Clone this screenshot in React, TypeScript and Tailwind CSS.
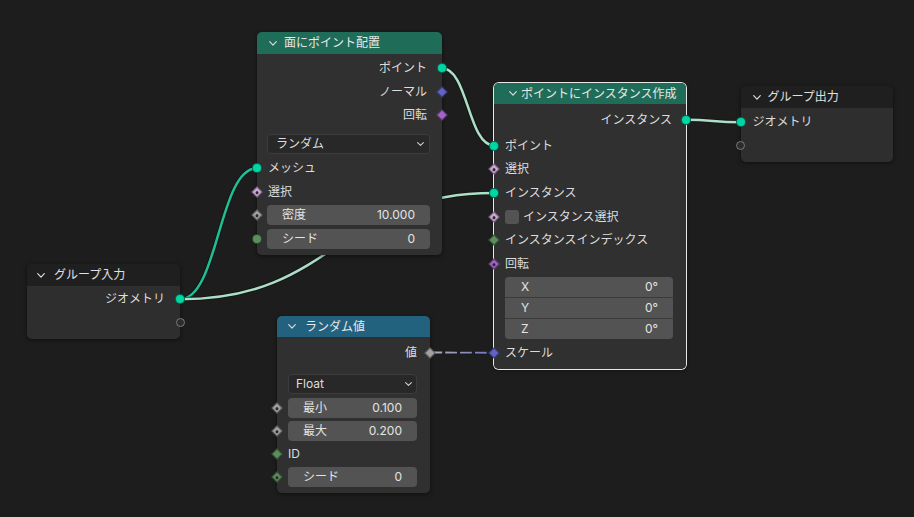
import React from 'react';

const GEO = 'bg-[#00d6a3]';
const VEC = 'bg-[#6363c7]';
const ROT = 'bg-[#a363c7]';
const BOOL = 'bg-[#cca6d6]';
const FLT = 'bg-[#a1a1a1]';
const INT = 'bg-[#5a8f5c]';

type Shape = 'circle' | 'diamond' | 'empty';

function Socket({ side, shape, color = '', dot }: { side: 'l' | 'r'; shape: Shape; color?: string; dot?: boolean }) {
  return (
    <div
      className={`absolute top-1/2 -translate-y-1/2 w-[10px] h-[10px] flex items-center justify-center z-10 ${
        side === 'l' ? 'left-[-5px]' : 'right-[-5px]'
      }`}
    >
      {shape === 'circle' && <div className={`w-[10px] h-[10px] shrink-0 rounded-full border border-black/50 ${color}`} />}
      {shape === 'empty' && <div className="w-[9px] h-[9px] shrink-0 rounded-full border border-[#7a7a7a] bg-[#2c2c2c]" />}
      {shape === 'diamond' && (
        <div className={`w-[8px] h-[8px] shrink-0 rotate-45 border border-black/40 flex items-center justify-center ${color}`}>
          {dot && <div className="w-[3px] h-[3px] shrink-0 rounded-full bg-[#2a2a2a]" />}
        </div>
      )}
    </div>
  );
}

function Chevron() {
  return (
    <svg width="8" height="5" viewBox="0 0 8 5" className="shrink-0">
      <path d="M0.7 0.7 L4 4.2 L7.3 0.7" fill="none" stroke="#dadada" strokeWidth="1.2" strokeLinecap="round" strokeLinejoin="round" />
    </svg>
  );
}

function SmallChevron() {
  return (
    <svg width="7" height="4" viewBox="0 0 7 4" className="shrink-0">
      <path d="M0.6 0.6 L3.5 3.3 L6.4 0.6" fill="none" stroke="#d0d0d0" strokeWidth="1.1" strokeLinecap="round" strokeLinejoin="round" />
    </svg>
  );
}

function Row({ h, className = '', children, sock }: { h: string; className?: string; children?: React.ReactNode; sock?: React.ReactNode }) {
  return (
    <div className={`relative flex items-center ${h} ${className}`}>
      {sock}
      {children}
    </div>
  );
}

function Field({ label, value }: { label: string; value: string }) {
  return (
    <div className="flex-1 h-[20px] rounded-[4px] bg-[#535353] flex items-center justify-between px-[15px] text-[#e4e4e4]">
      <span>{label}</span>
      <span>{value}</span>
    </div>
  );
}

export default function App() {
  return (
    <div className="relative w-[914px] h-[517px] overflow-hidden bg-[#1d1d1d] text-[12px] leading-none text-[#dddddd] font-['Inter','Noto_Sans_CJK_JP',sans-serif]">
      {/* links */}
      <svg className="absolute inset-0" width="914" height="517" viewBox="0 0 914 517">
        <defs>
          <linearGradient id="valscale" x1="430" y1="0" x2="494" y2="0" gradientUnits="userSpaceOnUse">
            <stop offset="0" stopColor="#b0b0b0" />
            <stop offset="1" stopColor="#6f6fcf" />
          </linearGradient>
        </defs>
        <g fill="none" strokeLinecap="round">
          <path d="M180 299.25 C218.5 299.25 218.5 168.3 257 168.3" stroke="#111" strokeOpacity="0.6" strokeWidth="4.5" />
          <path d="M180 299.25 C218.5 299.25 218.5 168.3 257 168.3" stroke="#1fbf94" strokeWidth="2.5" />

          <path d="M180 299.25 C337 299.25 337 193 494 193" stroke="#111" strokeOpacity="0.6" strokeWidth="4.5" />
          <path d="M180 299.25 C337 299.25 337 193 494 193" stroke="#acdfc8" strokeWidth="2.5" />

          <path d="M442 68.2 C468 68.2 468 145.5 494 145.5" stroke="#111" strokeOpacity="0.6" strokeWidth="4.5" />
          <path d="M442 68.2 C468 68.2 468 145.5 494 145.5" stroke="#acdfc8" strokeWidth="2.5" />

          <path d="M686 119.8 C713 119.8 713 122.3 740.5 122.3" stroke="#111" strokeOpacity="0.6" strokeWidth="4.5" />
          <path d="M686 119.8 C713 119.8 713 122.3 740.5 122.3" stroke="#acdfc8" strokeWidth="2.5" />

          <path d="M430 352.5 C462 352.5 462 352.75 494 352.75" stroke="#111" strokeOpacity="0.5" strokeWidth="3.5" strokeDasharray="12 3" strokeLinecap="butt" />
          <path d="M430 352.5 C462 352.5 462 352.75 494 352.75" stroke="url(#valscale)" strokeWidth="1.8" strokeDasharray="12 3" strokeLinecap="butt" />
        </g>
      </svg>

      {/* 面にポイント配置 */}
      <div className="absolute left-[257px] top-[32px] w-[185px] rounded-[5px] shadow-[0_1px_4px_rgba(0,0,0,0.5)]">
        <div className="h-[22px] rounded-t-[5px] bg-[#1f6c59] flex items-center pl-[12px] gap-[7px] text-[#e8e8e8]">
          <Chevron />
          <span>面にポイント配置</span>
        </div>
        <div className="rounded-b-[5px] bg-[#303030] pt-[2.5px] pb-[4.5px]">
          <Row h="h-[23.4px]" className="justify-end pr-[15px]" sock={<Socket side="r" shape="circle" color={GEO} />}>
            ポイント
          </Row>
          <Row h="h-[23.4px]" className="justify-end pr-[15px]" sock={<Socket side="r" shape="diamond" color={VEC} />}>
            ノーマル
          </Row>
          <Row h="h-[23.4px]" className="justify-end pr-[15px]" sock={<Socket side="r" shape="diamond" color={ROT} />}>
            回転
          </Row>
          <div className="mt-[7px] mb-[3px] ml-[10px] mr-[12px] h-[20px] rounded-[4px] bg-[#282828] border border-[#3c3c3c] flex items-center justify-between pl-[8px] pr-[5px]">
            <span>ランダム</span>
            <SmallChevron />
          </div>
          <Row h="h-[23.4px]" className="pl-[11px]" sock={<Socket side="l" shape="circle" color={GEO} />}>
            メッシュ
          </Row>
          <Row h="h-[23.4px]" className="pl-[11px]" sock={<Socket side="l" shape="diamond" color={BOOL} dot />}>
            選択
          </Row>
          <Row h="h-[23.4px]" className="pl-[10px] pr-[12px]" sock={<Socket side="l" shape="diamond" color={FLT} dot />}>
            <Field label="密度" value="10.000" />
          </Row>
          <Row h="h-[23.4px]" className="pl-[10px] pr-[12px]" sock={<Socket side="l" shape="circle" color={INT} />}>
            <Field label="シード" value="0" />
          </Row>
        </div>
      </div>

      {/* ポイントにインスタンス作成 (selected) */}
      <div className="absolute left-[494px] top-[83px] w-[192px] rounded-[5px] ring-1 ring-[#e8e8e8] shadow-[0_1px_4px_rgba(0,0,0,0.5)]">
        <div className="h-[21px] rounded-t-[5px] bg-[#1f6c59] flex items-center pl-[15px] gap-[4px] text-[#e8e8e8]">
          <Chevron />
          <span>ポイントにインスタンス作成</span>
        </div>
        <div className="rounded-b-[5px] bg-[#303030] pt-[4px] pb-[4.5px]">
          <Row h="h-[23.7px]" className="justify-end pr-[14px]" sock={<Socket side="r" shape="circle" color={GEO} />}>
            インスタンス
          </Row>
          <div className="h-[2px]" />
          <Row h="h-[23.7px]" className="pl-[11px]" sock={<Socket side="l" shape="circle" color={GEO} />}>
            ポイント
          </Row>
          <Row h="h-[23.7px]" className="pl-[11px]" sock={<Socket side="l" shape="diamond" color={BOOL} dot />}>
            選択
          </Row>
          <Row h="h-[23.7px]" className="pl-[11px]" sock={<Socket side="l" shape="circle" color={GEO} />}>
            インスタンス
          </Row>
          <Row h="h-[23.7px]" className="pl-[11px] gap-[4px]" sock={<Socket side="l" shape="diamond" color={BOOL} dot />}>
            <div className="w-[14px] h-[14px] rounded-[3px] bg-[#535353]" />
            <span>インスタンス選択</span>
          </Row>
          <Row h="h-[23.7px]" className="pl-[11px]" sock={<Socket side="l" shape="diamond" color={INT} />}>
            インスタンスインデックス
          </Row>
          <Row h="h-[23.7px]" className="pl-[11px]" sock={<Socket side="l" shape="diamond" color={ROT} dot />}>
            回転
          </Row>
          <div className="mt-[1px] mb-[2px] ml-[11px] mr-[13px] rounded-[4px] overflow-hidden flex flex-col gap-[1px] bg-[#3a3a3a] text-[#e4e4e4]">
            <div className="h-[20px] bg-[#535353] flex items-center justify-between pl-[16px] pr-[15px]">
              <span>X</span>
              <span>0°</span>
            </div>
            <div className="h-[20px] bg-[#535353] flex items-center justify-between pl-[16px] pr-[15px]">
              <span>Y</span>
              <span>0°</span>
            </div>
            <div className="h-[20px] bg-[#535353] flex items-center justify-between pl-[16px] pr-[15px]">
              <span>Z</span>
              <span>0°</span>
            </div>
          </div>
          <Row h="h-[23.7px]" className="pl-[11px]" sock={<Socket side="l" shape="diamond" color={VEC} />}>
            スケール
          </Row>
        </div>
      </div>

      {/* グループ出力 */}
      <div className="absolute left-[740.5px] top-[86px] w-[152px] rounded-[5px] shadow-[0_1px_4px_rgba(0,0,0,0.5)]">
        <div className="h-[22px] rounded-t-[5px] bg-[#1f1f1f] flex items-center pl-[12px] gap-[7px] text-[#e0e0e0]">
          <Chevron />
          <span>グループ出力</span>
        </div>
        <div className="rounded-b-[5px] bg-[#2e2e2e] pt-[2.5px] pb-[4px]">
          <Row h="h-[23.5px]" className="pl-[12px]" sock={<Socket side="l" shape="circle" color={GEO} />}>
            ジオメトリ
          </Row>
          <Row h="h-[23.5px]" sock={<Socket side="l" shape="empty" />} />
        </div>
      </div>

      {/* グループ入力 */}
      <div className="absolute left-[27px] top-[264px] w-[153px] rounded-[5px] shadow-[0_1px_4px_rgba(0,0,0,0.5)]">
        <div className="h-[22px] rounded-t-[5px] bg-[#1f1f1f] flex items-center pl-[10px] gap-[9px] text-[#e0e0e0]">
          <Chevron />
          <span>グループ入力</span>
        </div>
        <div className="rounded-b-[5px] bg-[#2e2e2e] pt-[1.5px] pb-[4.5px]">
          <Row h="h-[23.5px]" className="justify-end pr-[15px]" sock={<Socket side="r" shape="circle" color={GEO} />}>
            ジオメトリ
          </Row>
          <Row h="h-[23.5px]" sock={<Socket side="r" shape="empty" />} />
        </div>
      </div>

      {/* ランダム値 */}
      <div className="absolute left-[277px] top-[316px] w-[153px] rounded-[5px] shadow-[0_1px_4px_rgba(0,0,0,0.5)]">
        <div className="h-[21px] rounded-t-[5px] bg-[#23627f] flex items-center pl-[11px] gap-[9px] text-[#e8e8e8]">
          <Chevron />
          <span>ランダム値</span>
        </div>
        <div className="rounded-b-[5px] bg-[#303030] pt-[4px] pb-[4px]">
          <Row h="h-[23px]" className="justify-end pr-[13px]" sock={<Socket side="r" shape="diamond" color={FLT} />}>
            値
          </Row>
          <div className="mt-[10px] mb-[2.5px] ml-[11px] mr-[13px] h-[20px] rounded-[4px] bg-[#282828] border border-[#3c3c3c] flex items-center justify-between pl-[7px] pr-[4px]">
            <span>Float</span>
            <SmallChevron />
          </div>
          <Row h="h-[23px]" className="pl-[11px] pr-[13px]" sock={<Socket side="l" shape="diamond" color={FLT} dot />}>
            <Field label="最小" value="0.100" />
          </Row>
          <Row h="h-[23px]" className="pl-[11px] pr-[13px]" sock={<Socket side="l" shape="diamond" color={FLT} dot />}>
            <Field label="最大" value="0.200" />
          </Row>
          <Row h="h-[23px]" className="pl-[11px]" sock={<Socket side="l" shape="diamond" color={INT} />}>
            ID
          </Row>
          <Row h="h-[23px]" className="pl-[11px] pr-[13px]" sock={<Socket side="l" shape="diamond" color={INT} dot />}>
            <Field label="シード" value="0" />
          </Row>
        </div>
      </div>
    </div>
  );
}
